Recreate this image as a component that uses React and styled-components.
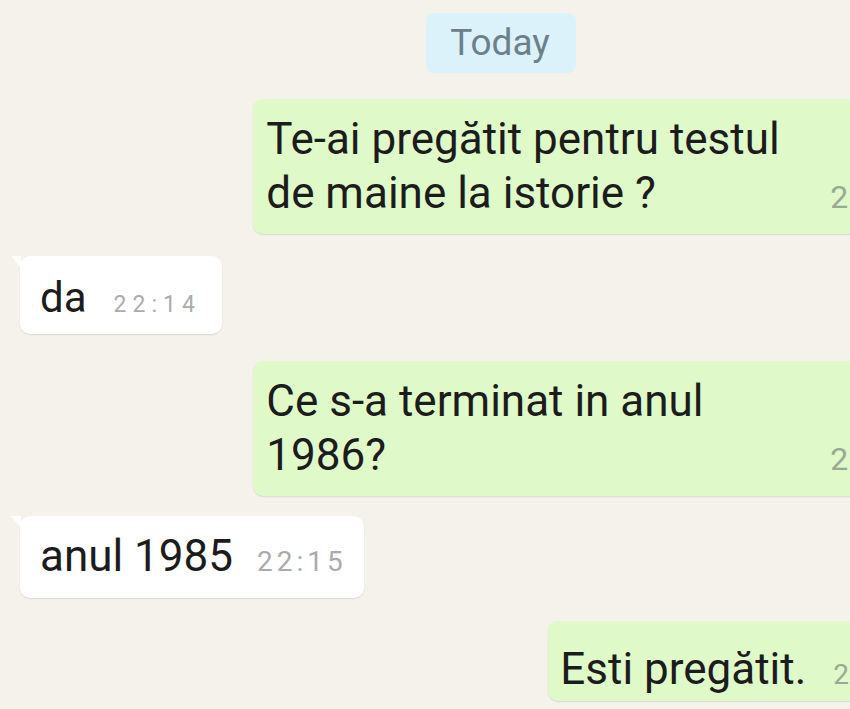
import React from 'react';
import styled, { createGlobalStyle } from 'styled-components';

const GlobalStyle = createGlobalStyle`
  html, body {
    margin: 0;
    padding: 0;
    background: #f5f1eb;
    overflow: hidden;
  }
  body {
    font-family: Roboto, "Noto Sans", sans-serif;
  }
`;

const Screen = styled.div`
  width: 850px;
  height: 709px;
  overflow: hidden;
  background: #f5f1eb;
`;

// the phone screen is wider than the crop, right side is cut off
const Chat = styled.div`
  width: 1002px;
  box-sizing: border-box;
  padding: 13px 20px 0 20px;
  display: flex;
  flex-direction: column;
`;

const DayRow = styled.div`
  display: flex;
  justify-content: center;
`;

const DayChip = styled.div`
  background: #dbf2fa;
  color: #6b808b;
  font-size: 37px;
  line-height: 44px;
  padding: 8px 26px 8px 24px;
  border-radius: 8px;
`;

const Row = styled.div`
  display: flex;
  justify-content: ${(p) => (p.$out ? 'flex-end' : 'flex-start')};
  margin-top: ${(p) => p.$gap}px;
`;

const Bubble = styled.div`
  position: relative;
  display: flex;
  align-items: last baseline;
  background: ${(p) => (p.$out ? '#dff9c9' : '#ffffff')};
  border-radius: 10px;
  box-shadow: 0 1px 1.5px rgba(0, 0, 0, 0.1);
  padding: ${(p) => p.$pad};

  &::before {
    content: '';
    display: ${(p) => (p.$tail ? 'block' : 'none')};
    position: absolute;
    top: 0;
    ${(p) => (p.$out ? 'right: -9px;' : 'left: -9px;')}
    width: 0;
    height: 0;
    border-top: 12px solid ${(p) => (p.$out ? '#dff9c9' : '#ffffff')};
    ${(p) => (p.$out ? 'border-right' : 'border-left')}: 10px solid transparent;
  }
`;

const Text = styled.div`
  color: #1c1c1c;
  font-size: ${(p) => p.$size}px;
  line-height: ${(p) => p.$lh}px;
  width: ${(p) => (p.$width ? `${p.$width}px` : 'auto')};
  white-space: ${(p) => (p.$width ? 'normal' : 'nowrap')};
`;

const Meta = styled.div`
  display: flex;
  align-items: baseline;
  gap: 6px;
  margin-left: ${(p) => p.$gap}px;
  white-space: nowrap;
`;

const Time = styled.span`
  color: ${(p) => (p.$out ? '#9aa995' : '#ababab')};
  font-size: ${(p) => p.$size}px;
  letter-spacing: ${(p) => p.$spacing || 0}px;
`;

const Ticks = () => (
  <svg width="34" height="20" viewBox="0 0 34 20" fill="none" stroke="#4fc3f7" strokeWidth="2.6" strokeLinecap="round" strokeLinejoin="round">
    <path d="M2 11l5 5L18 4" />
    <path d="M13 15l1 1L25 4" />
  </svg>
);

const messages = [
  {
    out: true, gap: 26, tail: true, pad: '13px 22px 14px 13px',
    text: 'Te-ai pregătit pentru testul de maine la istorie ?', time: '22:13',
    size: 44, lh: 54, width: 535, metaGap: 29, timeSize: 32, spacing: 2,
  },
  {
    out: false, gap: 22, tail: true, pad: '17px 21px 11px 20px',
    text: 'da', time: '22:14', size: 42, lh: 50, metaGap: 27, timeSize: 23, spacing: 6,
  },
  {
    out: true, gap: 27, tail: true, pad: '13px 22px 14px 13px',
    text: 'Ce s-a terminat in anul 1986?', time: '22:14',
    size: 44, lh: 54, width: 535, metaGap: 29, timeSize: 32, spacing: 2,
  },
  {
    out: false, gap: 20, tail: true, pad: '15px 17px 17px 20px',
    text: 'anul 1985', time: '22:15', size: 44, lh: 50, metaGap: 24, timeSize: 28, spacing: 4,
  },
  {
    out: true, gap: 23, tail: true, pad: '23px 29px 7px 12px',
    text: 'Esti pregătit.', time: '22:15', size: 44, lh: 50, metaGap: 27, timeSize: 28, spacing: 2,
  },
];

const App = () => (
  <Screen>
    <GlobalStyle />
    <Chat>
      <DayRow>
        <DayChip>Today</DayChip>
      </DayRow>
      {messages.map((m, i) => (
        <Row key={i} $out={m.out} $gap={m.gap}>
          <Bubble $out={m.out} $tail={m.tail} $pad={m.pad}>
            <Text $size={m.size} $lh={m.lh} $width={m.width}>{m.text}</Text>
            <Meta $gap={m.metaGap}>
              <Time $out={m.out} $size={m.timeSize} $spacing={m.spacing}>{m.time}</Time>
              {m.out && <Ticks />}
            </Meta>
          </Bubble>
        </Row>
      ))}
    </Chat>
  </Screen>
);

export default App;
